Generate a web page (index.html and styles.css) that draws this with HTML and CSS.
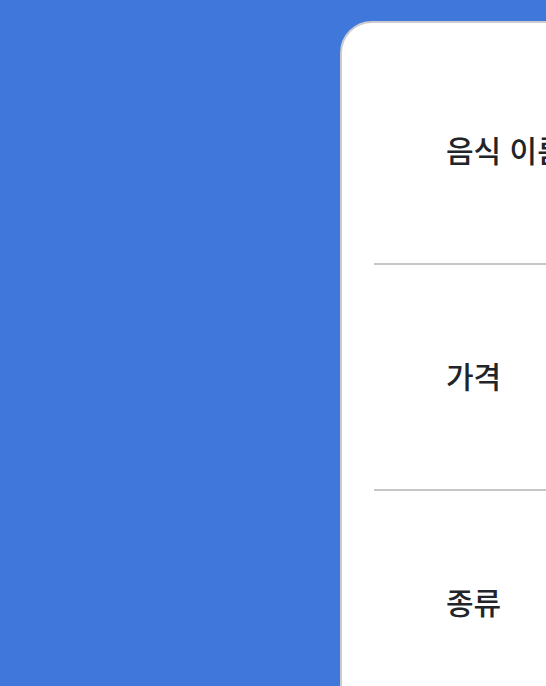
FILE: index.html
```
<!DOCTYPE html>
<html lang="ko">
<head>
<meta charset="utf-8">
<title>음식 정보</title>
<link rel="stylesheet" href="styles.css">
</head>
<body>
<main class="page">
<dl class="card">
<div class="row"><dt>음식 이름</dt></div>
<div class="row"><dt>가격</dt></div>
<div class="row"><dt>종류</dt></div>
</dl>
</main>
</body>
</html>
```
FILE: styles.css
```
* {
  box-sizing: border-box;
}

body {
  margin: 0;
  background: #4077da;
  color: #212529;
  font-family: "Noto Sans CJK KR", sans-serif;
}

.page {
  display: flex;
  height: 100vh;
  padding: 21px 0 0 340px;
  overflow: hidden;
}

/* The card runs past the right and bottom edges of the window. */
.card {
  flex: 1 0 800px;
  height: max-content;
  margin: 0;
  padding: 16px 32px;
  border: 2px solid #cbcbcd;
  border-radius: 32px;
  background: #fff;
}

.row {
  display: flex;
  align-items: center;
  height: 226px;
  padding: 0 72px 4px;
  border-bottom: 2px solid #c6c6c6;
}

.row:last-child {
  border-bottom-color: transparent;
}

dt {
  font-size: 30px;
  font-weight: 500;
  line-height: 48px;
  white-space: nowrap;
}
```
